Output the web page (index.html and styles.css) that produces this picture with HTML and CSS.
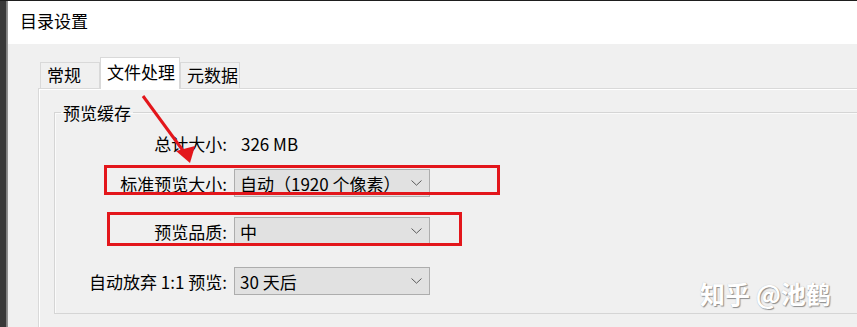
FILE: index.html
```html
<!DOCTYPE html>
<html lang="zh-CN">
<head>
    <meta charset="UTF-8">
    <title>目录设置</title>
    <link rel="stylesheet" href="styles.css">
</head>
<body>
    <div class="window">
        <div class="edge"></div>
        <div class="dialog">
            <div class="titlebar">目录设置</div>
            <div class="content">
                <div class="tabs">
                    <div class="tab">常规</div>
                    <div class="tab active">文件处理</div>
                    <div class="tab">元数据</div>
                </div>
                <div class="panel">
                    <fieldset class="group">
                        <legend>预览缓存</legend>
                        <div class="form">
                            <div class="row">
                                <div class="label">总计大小:</div>
                                <div class="value">326 MB</div>
                            </div>
                            <div class="row row-size">
                                <div class="label">标准预览大小:</div>
                                <div class="select">
                                    <span>自动（1920 个像素）</span>
                                    <svg class="chevron" width="11" height="6" viewBox="0 0 11 6"><path d="M0.5 0.5 L5.5 5.2 L10.5 0.5" fill="none" stroke="#5a5a5a" stroke-width="1"/></svg>
                                </div>
                            </div>
                            <div class="row row-quality">
                                <div class="label">预览品质:</div>
                                <div class="select">
                                    <span>中</span>
                                    <svg class="chevron" width="11" height="6" viewBox="0 0 11 6"><path d="M0.5 0.5 L5.5 5.2 L10.5 0.5" fill="none" stroke="#5a5a5a" stroke-width="1"/></svg>
                                </div>
                            </div>
                            <div class="row row-purge">
                                <div class="label">自动放弃 1:1 预览:</div>
                                <div class="select">
                                    <span>30 天后</span>
                                    <svg class="chevron" width="11" height="6" viewBox="0 0 11 6"><path d="M0.5 0.5 L5.5 5.2 L10.5 0.5" fill="none" stroke="#5a5a5a" stroke-width="1"/></svg>
                                </div>
                            </div>
                        </div>
                    </fieldset>
                </div>
            </div>
        </div>

        <!-- annotations drawn over the dialog -->
        <svg class="marks" width="857" height="327" viewBox="0 0 857 327">
            <rect x="101.5" y="58.5" width="77" height="29" fill="none" stroke="#e3161b" stroke-width="3"/>
            <rect x="105.5" y="166.5" width="393" height="27" fill="none" stroke="#e3161b" stroke-width="3"/>
            <rect x="108.5" y="213.5" width="352" height="31" fill="none" stroke="#e3161b" stroke-width="3"/>
            <line x1="143" y1="96" x2="184" y2="152" stroke="#e3161b" stroke-width="3"/>
            <polygon points="190,163 176,151 195,146" fill="#e3161b"/>
        </svg>
        <div class="watermark">知乎 @池鹤</div>
    </div>
</body>
</html>
```

FILE: styles.css
```css
*{
    box-sizing: border-box;
}

html, body{
    margin: 0;
    overflow: hidden;
}

body{
    background-color: #f0f0f0;
    font-family: "Noto Sans CJK SC", "Microsoft YaHei", sans-serif;
    font-size: 17px;
    color: #000;
    text-spacing-trim: space-all;
}

.window{
    position: relative;
    display: flex;
    width: 857px;
    height: 327px;
    border-top: 1px solid #1e1e1e;
    overflow: hidden;
}

.edge{
    width: 8px;
    flex: none;
    background: linear-gradient(to right, #393939 0, #393939 6px, #7a7a7a 6px, #9a9a9a 8px);
}

.dialog{
    flex: 1;
    display: flex;
    flex-direction: column;
    min-width: 0;
}

.titlebar{
    height: 43px;
    background-color: #fff;
    padding: 11px 0 0 12px;
    line-height: 17px;
}

.content{
    flex: 1;
    background-color: #f0f0f0;
    padding: 13px 0 0 30px;
    display: flex;
    flex-direction: column;
}

.tabs{
    display: flex;
    align-items: flex-end;
    margin-left: 2px;
    height: 31px;
    position: relative;
    z-index: 1;
}

.tab{
    height: 26px;
    line-height: 24px;
    padding-left: 6px;
    border: 1px solid #d9d9d9;
    border-bottom: none;
    background-color: #f0f0f0;
    width: 60px;
}

.tab.active{
    height: 32px;
    margin-bottom: -1px;
    width: 80px;
    padding-left: 6px;
    line-height: 28px;
    background-color: #fff;
}

.panel{
    flex: 1;
    border-top: 1px solid #d9d9d9;
    border-left: 1px solid #d9d9d9;
    box-shadow: inset 1px 1px 0 #fff;
    padding: 15px 0 0 15px;
}

.group{
    margin: 0;
    padding: 0;
    border: 1px solid #d5d5d5;
    border-right: none;
    box-shadow: inset 1px 1px 0 #fafafa;
}

.group legend{
    margin-left: 6px;
    padding: 0 2px;
    line-height: 17px;
}

.form{
    display: flex;
    flex-direction: column;
    padding: 8px 0 18px 0;
}

.row{
    display: flex;
    align-items: center;
    height: 28px;
    gap: 7px;
}

.row-size{
    margin-top: 12px;
}

.row-quality{
    margin-top: 20px;
}

.row-purge{
    margin-top: 22px;
}

.label{
    width: 172px;
    text-align: right;
    white-space: nowrap;
}

.value{
    padding-left: 7px;
}

.select{
    width: 196px;
    height: 28px;
    display: flex;
    align-items: center;
    justify-content: space-between;
    padding: 0 7px 0 5px;
    background-color: #e1e1e1;
    border: 1px solid #adadad;
    white-space: nowrap;
}

.marks{
    position: absolute;
    left: 0;
    top: -1px;
    pointer-events: none;
}

.watermark{
    position: absolute;
    left: 700px;
    top: 274px;
    font-size: 25px;
    font-weight: bold;
    color: #fff;
    text-shadow: 1px 1px 1px #8c8c8c, 0 0 1px #bbb;
}
```
